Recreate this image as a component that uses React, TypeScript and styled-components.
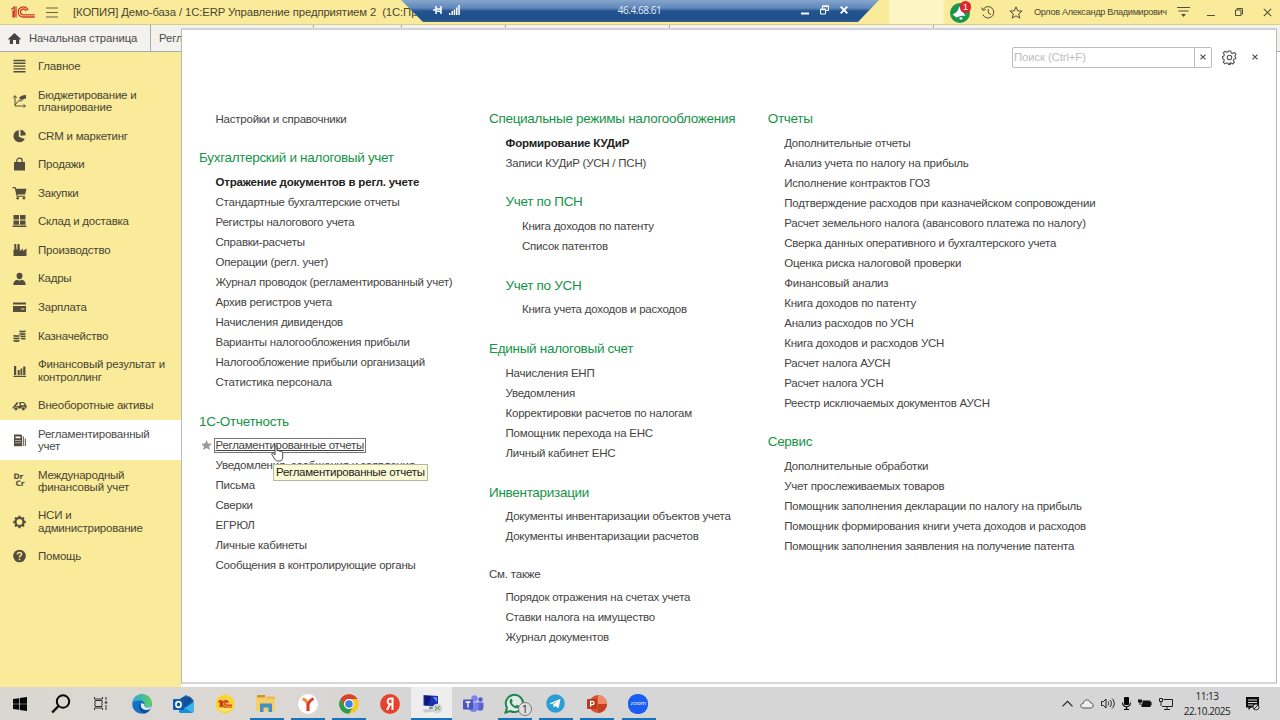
import React from "react";
import styled, { createGlobalStyle, css } from "styled-components";

const ink = "#544c3c";

const Global = createGlobalStyle`
  * { box-sizing: border-box; }
  html, body { margin: 0; padding: 0; overflow: hidden; }
  body { font-family: "Liberation Sans", Arial, sans-serif; color: #444; background: #fff; }
  svg { display: block; flex: none; }
`;

const Screen = styled.div`
  position: relative;
  width: 1280px;
  height: 720px;
  display: flex;
  flex-direction: column;
  overflow: hidden;
  background: #fff;
`;

/* ---------- Title bar ---------- */
const TitleBar = styled.header`
  position: relative;
  height: 25px;
  flex: none;
  display: flex;
  align-items: center;
  background: linear-gradient(90deg, #f9eb9a 0 888px, #fdf5c4 890px 943px, #f9eb9a 945px);
  border-bottom: 1px solid #d9cd8c;
`;
const Logo = styled.div`
  margin-left: 11px;
  width: 35px;
`;
const Title = styled.div`
  margin-left: 15px;
  font-size: 11.33px;
  letter-spacing: -0.12px;
  white-space: pre;
  color: #4d4630;
  flex: 1;
`;
const TitleTools = styled.div`
  display: flex;
  align-items: center;
  padding-right: 8px;
  color: ${ink};
`;
const UserName = styled.span`
  width: 134px;
  margin: 0 9px 0 11px;
  font-size: 9.2px;
  letter-spacing: -0.33px;
  white-space: nowrap;
  color: #4d4630;
`;
const Bell = styled.div`
  position: relative;
  width: 22px;
  height: 22px;
  margin-right: 10px;
`;
const BellCount = styled.span`
  position: absolute;
  left: 11px;
  top: 0;
  width: 11px;
  height: 12px;
  border-radius: 6px;
  background: #e0242f;
  color: #fff;
  font-size: 9px;
  line-height: 12px;
  text-align: center;
`;
const RemoteBar = styled.div`
  position: absolute;
  left: 401px;
  top: 0;
  width: 478px;
  height: 22px;
  display: flex;
  align-items: center;
  padding: 0 31px 2px 32px;
  clip-path: polygon(0 0, 100% 0, 457px 100%, 22px 100%);
  background: linear-gradient(180deg, #86a5cb 0, #5f88bb 8px, #24548f 11px, #1d4f8c 19px, #3a5f86 22px);
  color: #fff;
`;
const RemoteAddress = styled.span`
  flex: 1;
  text-align: center;
  font: 10px/20px "Open Sans", sans-serif;
  letter-spacing: -0.45px;
  padding-left: 18px;
  color: #e6edf6;
`;
const Cluster = styled.div<{ $gap: number }>`
  display: flex;
  align-items: center;
  gap: ${(p) => p.$gap}px;
`;

/* ---------- Tabs ---------- */
const Tabs = styled.nav`
  height: 27px;
  flex: none;
  display: flex;
  background: #f3f2ee;
  border-bottom: 1px solid #a9a9a9;
`;
const Tab = styled.div<{ $width: number }>`
  width: ${(p) => p.$width}px;
  flex: none;
  display: flex;
  align-items: center;
  gap: 8px;
  padding-left: 8px;
  border-right: 1px solid #aaa;
  font-size: 11.33px;
  letter-spacing: -0.07px;
  color: #4a4a4a;
  white-space: nowrap;
  overflow: hidden;
`;

/* ---------- Sidebar ---------- */
const Body = styled.div`
  flex: 1;
  display: flex;
  min-height: 0;
`;
const Sidebar = styled.aside`
  width: 181px;
  background: #f9eb9a;
`;
const Section = styled.div<{ $active?: boolean }>`
  display: flex;
  align-items: center;
  padding: 8.15px 0 8.15px 12px;
  font-size: 11.5px;
  letter-spacing: -0.22px;
  line-height: 12.3px;
  white-space: pre;
  color: #4a4434;
  ${(p) => p.$active && css`background: #fff; color: #4a4a4a;`}
`;
const SectionIcon = styled.span`
  width: 26px;
  height: 12px;
  display: flex;
  align-items: center;
  color: ${ink};
`;
const DrCr = styled.span`
  display: flex;
  flex-direction: column;
  padding-left: 1.5px;
  font: bold 7.5px/6.5px "DejaVu Sans", sans-serif;
  letter-spacing: -0.2px;
  span + span { padding-left: 2px; }
`;

/* ---------- Function menu ---------- */
const Panel = styled.main`
  position: absolute;
  left: 181px;
  top: 28px;
  width: 1096px;
  height: 656px;
  background: #fff;
  border: 1px solid #b9b9b9;
  border-top: 2px solid #d2d2d6;
  border-bottom: 2px solid #d6d6d6;
`;
const PanelHead = styled.div`
  display: flex;
  align-items: center;
  justify-content: flex-end;
  gap: 9.5px;
  padding: 17px 18px 0 0;
  height: 37px;
`;
const Search = styled.div`
  width: 200px;
  height: 21px;
  display: flex;
  border: 1px solid #bcbcbc;
  border-radius: 2px;
`;
const SearchText = styled.span`
  flex: 1;
  padding-left: 1px;
  font-size: 11.33px;
  letter-spacing: -0.1px;
  line-height: 19px;
  color: #bdbdbd;
`;
const SearchClear = styled.span`
  width: 17px;
  display: flex;
  align-items: center;
  justify-content: center;
  border-left: 1px solid #bcbcbc;
`;
const PanelClose = styled.span`
  padding-left: 6px;
`;
const Columns = styled.div`
  display: flex;
  padding: 37px 0 0 17px;
`;
const Column = styled.div<{ $width: number }>`
  width: ${(p) => p.$width}px;
  flex: none;
`;
const Group = styled.section<{ $indent?: boolean }>`
  margin-bottom: 14.85px;
  padding-left: ${(p) => (p.$indent ? 16.5 : 0)}px;
`;
const Heading = styled.h2<{ $plain?: boolean }>`
  margin: 0;
  font-weight: normal;
  white-space: nowrap;
  ${(p) =>
    p.$plain
      ? css`margin-top: -1.6px; height: 27.2px; line-height: 28px; font-size: 11.5px; letter-spacing: -0.2px; color: #444;`
      : css`height: 28.6px; line-height: 29px; font-size: 13.5px; letter-spacing: -0.3px; color: #149447;`}
`;
const Item = styled.div<{ $bold?: boolean }>`
  position: relative;
  height: 20px;
  padding-left: 16.5px;
  font-size: 11.5px;
  letter-spacing: ${(p) => (p.$bold ? -0.19 : -0.23)}px;
  line-height: 20px;
  white-space: nowrap;
  color: ${(p) => (p.$bold ? "#222" : "#444")};
  font-weight: ${(p) => (p.$bold ? "bold" : "normal")};
`;
const First = styled.div`
  padding-top: 5.1px;
  margin-bottom: 14.2px;
`;
const Star = styled.span`
  position: absolute;
  left: 2px;
  top: 5px;
`;
const Focused = styled.span`
  display: inline-block;
  height: 15px;
  line-height: 13px;
  margin: 0 -2px;
  padding: 0 1px;
  border: 1px solid #777;
  letter-spacing: -0.29px;
  text-decoration: underline;
  vertical-align: middle;
  position: relative;
  top: -1px;
`;
const Tooltip = styled.div`
  position: absolute;
  left: 273px;
  top: 464px;
  width: 155px;
  height: 17px;
  padding-left: 2px;
  border: 1px solid #b8b69c;
  background: #fdfad6;
  font-size: 11.5px;
  letter-spacing: -0.28px;
  line-height: 15px;
  color: #222;
  white-space: nowrap;
`;
const Cursor = styled.div`
  position: absolute;
  left: 270.5px;
  top: 445px;
`;

/* ---------- Taskbar ---------- */
const Taskbar = styled.footer`
  position: relative;
  height: 33px;
  flex: none;
  display: flex;
  background: linear-gradient(90deg, #d9d7d0 0, #dcd8d4 250px, #d6d6d6 360px, #d6d6d6 1280px);
`;
const TaskButton = styled.div<{ $width?: number; $active?: boolean; $open?: boolean }>`
  position: relative;
  width: ${(p) => p.$width ?? 41.33}px;
  flex: none;
  display: flex;
  align-items: center;
  justify-content: center;
  background: ${(p) => (p.$active ? "#eeeeee" : "transparent")};
  &::after {
    content: "";
    display: ${(p) => (p.$open || p.$active ? "block" : "none")};
    position: absolute;
    bottom: 0;
    left: ${(p) => (p.$active ? 0 : 4)}px;
    right: ${(p) => (p.$active ? 0 : 3.5)}px;
    height: 2px;
    background: #1a73b8;
  }
`;
const Tray = styled.div`
  margin-left: auto;
  display: flex;
  align-items: center;
  padding-right: 20px;
  color: #222;
`;
const Clock = styled.div`
  width: 54px;
  margin: 0 11px 0 7px;
  font: 10px/15px "Open Sans", sans-serif;
  letter-spacing: -0.45px;
  text-align: center;
  color: #222;
  white-space: nowrap;
`;

/* ---------- Drawings ---------- */
const Cross = ({ size = 7, w = 1.1 }: { size?: number; w?: number }) => (
  <svg width={size} height={size} viewBox="0 0 8 8" stroke="currentColor" strokeWidth={w} fill="none">
    <path d="M.7 .7L7.3 7.3M7.3 .7L.7 7.3" />
  </svg>
);

const glyphs: Record<string, React.ReactNode> = {
  main: <path d="M1 .8h12v1.400H1zM1 3.600h12v1.400H1zM1 6.400h12v1.400H1zM1 9.200h12v1.400H1zM1 12h12v1.400H1z" />,
  budget: (
    <>
      <path d="M2.500 2v10h10M.8 3.800L2.500 1.600l1.700 2.200M11 10.400L13 12l-2 1.600M2.500 11L6 6.800h3L12.500 3" fill="none" stroke="currentColor" strokeWidth="1" />
      <path d="M7 3l3-1.500 3.500-.5v3.500L9 5.500H7z" />
    </>
  ),
  pie: <path d="M6.300 1.200V7.700l6 2.200A6 6 0 1 1 6.300 1.200zM8 .8a6 6 0 0 1 5.300 5.500L8 6.700z" />,
  bag: (
    <>
      <path d="M1.500 5h11v8.500h-11z" />
      <path d="M4.300 6.500V3.800a2.700 2.700 0 0 1 5.400 0v2.700" fill="none" stroke="currentColor" strokeWidth="1.200" />
    </>
  ),
  cart: (
    <>
      <path d="M0 1h3l.6 1.700H14L12.600 8.600H4.800l.3 1.100h7.500v1H4.200L2.300 2.200H0z" />
      <circle cx="5.200" cy="12.300" r="1.300" /><circle cx="11.400" cy="12.300" r="1.300" />
    </>
  ),
  store: <path d="M1 1h5.500v4.500H1zM7.500 1H13v4.500H7.500zM1 6.500h5.500v4.300H1zM7.500 6.500H13v4.300H7.500zM0 11.600h14V13H0z" />,
  factory: <path d="M1 13V6.500h1L1.700 1h2L4 6.500h.8L5 1h2l.4 5.500V8l3-2.500V8L14 5.500V13z" />,
  person: (
    <>
      <path d="M7 .8c2 0 3 1.300 3 3S8.700 7.300 7 7.300 4 5.500 4 3.800s1-3 3-3z" />
      <path d="M.8 13c0-3 1.200-4.700 4.200-5.200l2 1 2-1c3 .5 4.200 2.200 4.200 5.200z" />
    </>
  ),
  card: <path d="M.5 2.500h13v2H.5zM.5 6h13v6H.5zM8.500 8.500v1H12v-1z" fillRule="evenodd" />,
  coins: (
    <g fill="none" stroke="currentColor" strokeWidth="1.600">
      <path d="M7 2c2 .8 4 .8 6 0M7 4.500c2 .8 4 .8 6 0M8 7c2 .8 3 .8 5 0M8.500 9.500c2 .5 3 .5 4.500 0M1 6.500c2 .8 4 .8 6 0M1 9c2 .8 4 .8 6 0M1 11.500c2 .8 4 .8 6 0" />
    </g>
  ),
  chart: <path d="M1.500 2h2.200v9H1.500zM5.200 6h2v5h-2zM8 4.500h1.800V11H8zM10.700 2.500h2.200V11h-2.200zM1 11.800h12.500V13H1z" />,
  truck: (
    <>
      <path d="M0 9.500L4.500 4l1.500.8L3.500 8H7V4h4.500L14 7.500v3H0z" />
      <path d="M8.500 5h2.300l1.400 2.200H8.500z" fill="#f9eb9a" />
      <circle cx="3.500" cy="10.800" r="1.900" stroke="#f9eb9a" strokeWidth=".7" /><circle cx="10.800" cy="10.800" r="1.900" stroke="#f9eb9a" strokeWidth=".7" />
    </>
  ),
  report: (
    <>
      <path d="M1.500 1.500h7l1 1v10.800h-8zM3 3.500v1.800h5V3.500zM3 7v1h1V7zm2 0v1h1V7zm2 0v1h1V7zM3 9.300v1h1v-1zm2 0v1h1v-1zm2 0v1h1v-1z" fillRule="evenodd" />
      <path d="M10.800 3.500v9.500M12.800 5.500V13" stroke="currentColor" strokeWidth="1" />
    </>
  ),
  gear: (
    <g fill="none" stroke="currentColor">
      <circle cx="7" cy="7" r="4" strokeWidth="2.200" />
      <path d="M7 .8v2M7 11.200v2M.8 7h2M11.200 7h2M2.600 2.600L4 4M10 10l1.400 1.400M2.600 11.400L4 10M10 4l1.400-1.400" strokeWidth="2.300" />
    </g>
  ),
  help: (
    <>
      <circle cx="7" cy="7" r="6.300" />
      <path d="M4.900 5.500C4.900 2.700 9.200 2.800 9.100 5.300 9 6.800 7 6.700 7 8.400M7 9.700v1.500" fill="none" stroke="#f9eb9a" strokeWidth="1.500" />
    </>
  ),
};

const Glyph = ({ name }: { name: string }) => (
  <svg width="15" height="14" viewBox="-.5 0 15 14" fill="currentColor">{glyphs[name]}</svg>
);

const Logo1C = () => (
  <svg width="24" height="12" viewBox="0 0 24 12" fill="none" stroke="#cf3a28" strokeWidth="1.300">
    <path d="M.3 3.500L3.200 1v10.500M2 4.500V11.500M5 .5v11" />
    <path d="M17 4.200A5 5 0 1 0 12.500 11h11.300M15.200 5.200a2.900 2.900 0 1 0-2.700 3.600h11.300" />
  </svg>
);

/* ---------- Data ---------- */
const sections: { icon: string; label: string; active?: boolean }[] = [
  { icon: "main", label: "Главное" },
  { icon: "budget", label: "Бюджетирование и\nпланирование" },
  { icon: "pie", label: "CRM и маркетинг" },
  { icon: "bag", label: "Продажи" },
  { icon: "cart", label: "Закупки" },
  { icon: "store", label: "Склад и доставка" },
  { icon: "factory", label: "Производство" },
  { icon: "person", label: "Кадры" },
  { icon: "card", label: "Зарплата" },
  { icon: "coins", label: "Казначейство" },
  { icon: "chart", label: "Финансовый результат и\nконтроллинг" },
  { icon: "truck", label: "Внеоборотные активы" },
  { icon: "report", label: "Регламентированный\nучет", active: true },
  { icon: "drcr", label: "Международный\nфинансовый учет" },
  { icon: "gear", label: "НСИ и\nадминистрирование" },
  { icon: "help", label: "Помощь" },
];

type GroupData = { title: string; items: string[]; bold?: boolean; indent?: boolean; plain?: boolean };

const accounting: GroupData[] = [
  {
    title: "Бухгалтерский и налоговый учет",
    bold: true,
    items: [
      "Отражение документов в регл. учете", "Стандартные бухгалтерские отчеты", "Регистры налогового учета",
      "Справки-расчеты", "Операции (регл. учет)", "Журнал проводок (регламентированный учет)",
      "Архив регистров учета", "Начисления дивидендов", "Варианты налогообложения прибыли",
      "Налогообложение прибыли организаций", "Статистика персонала",
    ],
  },
  {
    title: "1С-Отчетность",
    items: [
      "Регламентированные отчеты", "Уведомления, сообщения и заявления", "Письма", "Сверки", "ЕГРЮЛ",
      "Личные кабинеты", "Сообщения в контролирующие органы",
    ],
  },
];
const taxes: GroupData[] = [
  { title: "Специальные режимы налогообложения", bold: true, items: ["Формирование КУДиР", "Записи КУДиР (УСН / ПСН)"] },
  { title: "Учет по ПСН", indent: true, items: ["Книга доходов по патенту", "Список патентов"] },
  { title: "Учет по УСН", indent: true, items: ["Книга учета доходов и расходов"] },
  {
    title: "Единый налоговый счет",
    items: ["Начисления ЕНП", "Уведомления", "Корректировки расчетов по налогам", "Помощник перехода на ЕНС", "Личный кабинет ЕНС"],
  },
  { title: "Инвентаризации", items: ["Документы инвентаризации объектов учета", "Документы инвентаризации расчетов"] },
  { title: "См. также", plain: true, items: ["Порядок отражения на счетах учета", "Ставки налога на имущество", "Журнал документов"] },
];
const reports: GroupData[] = [
  {
    title: "Отчеты",
    items: [
      "Дополнительные отчеты", "Анализ учета по налогу на прибыль", "Исполнение контрактов ГОЗ",
      "Подтверждение расходов при казначейском сопровождении", "Расчет земельного налога (авансового платежа по налогу)",
      "Сверка данных оперативного и бухгалтерского учета", "Оценка риска налоговой проверки", "Финансовый анализ",
      "Книга доходов по патенту", "Анализ расходов по УСН", "Книга доходов и расходов УСН", "Расчет налога АУСН",
      "Расчет налога УСН", "Реестр исключаемых документов АУСН",
    ],
  },
  {
    title: "Сервис",
    items: [
      "Дополнительные обработки", "Учет прослеживаемых товаров", "Помощник заполнения декларации по налогу на прибыль",
      "Помощник формирования книги учета доходов и расходов", "Помощник заполнения заявления на получение патента",
    ],
  },
];

const Groups = ({ data }: { data: GroupData[] }) => (
  <>
    {data.map((g) => (
      <Group key={g.title} $indent={g.indent}>
        <Heading $plain={g.plain}>{g.title}</Heading>
        {g.items.map((t, i) =>
          t === "Регламентированные отчеты" ? (
            <Item key={t}>
              <Star>
                <svg width="11" height="10" viewBox="0 0 11 10" fill="#999"><path d="M5.500 0l1.500 3.500 4 .2-3 2.500 1 3.800-3.500-2.100L2 10l1-3.800L0 3.700l4-.2z" /></svg>
              </Star>
              <Focused>{t}</Focused>
            </Item>
          ) : (
            <Item key={t} $bold={g.bold && i === 0}>{t}</Item>
          )
        )}
      </Group>
    ))}
  </>
);

const WindowsIcon = () => (
  <svg width="14" height="14" viewBox="0 0 14 14" fill="#050505"><path d="M0 2l6-.8v5.500H0zM6.700 1.100L14 0v6.700H6.700zM0 7.300h6v5.500L0 12zM6.700 7.300H14V14l-7.300-1.100z" /></svg>
);
const SearchIcon = () => (
  <svg width="20" height="20" viewBox="0 0 20 20" fill="none" stroke="#080808" strokeWidth="2"><circle cx="12" cy="7.500" r="6.200" /><path d="M7.500 12L1.200 18.500" strokeWidth="2.400" /></svg>
);
const TaskViewIcon = () => (
  <svg width="14" height="13" viewBox="0 0 14 13" fill="none" stroke="#333"><path d="M.5 0v2h8V0M.5 13v-2h8v2M1 3.500h7v6H1zM12 0v3M12 8v5" /><path d="M10.800 4.500h2.400v2h-2.400z" fill="#333" stroke="none" /></svg>
);
const EdgeIcon = () => (
  <svg width="20" height="20" viewBox="0 0 20 20">
    <defs><linearGradient id="eg" x1="0" x2="1"><stop offset="0" stopColor="#2aa7e0" /><stop offset="1" stopColor="#62cf5c" /></linearGradient></defs>
    <circle cx="10" cy="10" r="9.800" fill="#1372c4" />
    <path d="M.3 9C1.500 2.500 6 .2 10 .2c6 0 9.800 4.300 9.800 8.600 0 3-2.300 4.700-4.800 4.700-2 0-3.500-.7-3-1.800 1.500-3-1-5.200-4-5.200C4 6.500 1.500 7.500.3 9z" fill="url(#eg)" />
    <path d="M12.300 10.500c-.8 1 .3 3 3 3 1.800 0 3.300-.6 4.200-2-.4 2-1 3-1.700 3.700-2.500 1.600-6.800 1.300-8.600-1C8.300 12.500 8.500 10.300 10 9z" fill="#dfeef6" />
    <path d="M8 9.500c-2.300 3 0 8.500 4 10 3-.5 5-2 6.200-4.500-3 1.800-7.800 1.300-9.200-2z" fill="#0c4f9e" />
  </svg>
);
const OutlookIcon = () => (
  <svg width="21" height="18" viewBox="0 0 21 18">
    <path d="M6 4.500L13 0l7.500 5v12H6z" fill="#1367b8" /><path d="M8 3l9-1.500 3 4-7 5.500H8z" fill="#174f93" />
    <path d="M6 17.500L20.500 7v9a2 2 0 0 1-2 2H7z" fill="#39b5ee" /><path d="M6 10l14 8H8a2 2 0 0 1-2-2z" fill="#1b8ddb" />
    <rect y="4" width="11" height="11" rx="1" fill="#0f5cad" /><ellipse cx="5.500" cy="9.500" rx="2.600" ry="2.900" fill="none" stroke="#fff" strokeWidth="1.600" />
  </svg>
);
const OneCIcon = () => (
  <svg width="20" height="20" viewBox="0 0 20 20">
    <circle cx="10" cy="10" r="9.500" fill="#fbd535" /><path d="M3 14a9 9 0 0 0 14 0z" fill="#ffe873" />
    <g fill="none" stroke="#cf3420" strokeWidth="1.200"><path d="M3.200 8l2-1.400v6.600M6.500 6.200v7M13.500 8.300A3.200 3.200 0 1 0 11 13h6M12.400 9a1.500 1.500 0 1 0-1.400 2.200h6" /></g>
  </svg>
);
const FolderIcon = () => (
  <svg width="20" height="17" viewBox="0 0 20 17">
    <path d="M1 0h8v4H1z" fill="#c9962c" /><path d="M0 2.500h19V16H0z" fill="#f6cf64" /><path d="M10 1.500h9V4h-9z" fill="#e9bd50" />
    <path d="M4 8.500h12V17h-3.500v-4.500h-5V17H4z" fill="#4390c4" />
  </svg>
);
const YBrowserIcon = () => (
  <svg width="20" height="20" viewBox="0 0 20 20">
    <circle cx="10" cy="10" r="9.900" fill="#fff" />
    <path d="M4.500 5c3 .5 5 3 5.500 6.500V17" fill="none" stroke="#f08a2c" strokeWidth="2.800" /><path d="M15.500 4.500c-3 1.500-5 4-5.500 7V17" fill="none" stroke="#dc3a35" strokeWidth="2.800" />
  </svg>
);
const ChromeIcon = () => (
  <svg width="20" height="20" viewBox="0 0 20 20">
    <circle cx="10" cy="10" r="9.800" fill="#f8c625" />
    <path d="M1.500 5.100A9.800 9.800 0 0 1 18.500 5.100H10A4.900 4.900 0 0 0 5.500 12z" fill="#d8402f" />
    <path d="M1.500 5.100A9.800 9.800 0 0 0 10 19.800L14.300 12.400A4.900 4.900 0 0 1 5.700 12.400z" fill="#2e9c4c" />
    <circle cx="10" cy="10" r="4.900" fill="#fff" /><circle cx="10" cy="10" r="3.800" fill="#3c7fe4" />
  </svg>
);
const YandexIcon = () => (
  <svg width="20" height="20" viewBox="0 0 20 20">
    <circle cx="10" cy="10" r="9.900" fill="#e8402a" />
    <path d="M12.500 16V4.500h-2c-3.800 0-3.700 5.300 0 5.800h2M10 10.300L7 16" fill="none" stroke="#fff" strokeWidth="2" />
  </svg>
);
const RdpIcon = () => (
  <svg width="22" height="20" viewBox="0 0 22 20">
    <path d="M2.500 1l14.500 1v10.500L2.500 11.500z" fill="#1b2fb0" /><path d="M3.500 2l7 .5-3.500 9-3.500-.3z" fill="#0d1a78" /><path d="M12 3l4 .3V8z" fill="#6f93ea" />
    <path d="M8 12.500h5v2.500H8z" fill="#8c8c99" /><path d="M1.500 15.500L13 15l3 2-12 1.700z" fill="#c7c9cf" />
    <circle cx="16.300" cy="14.500" r="4.800" fill="#cfd6cf" /><path d="M14 12.500l2.200 2-2.200 2M18.800 12l-2 2 2 2.200" fill="none" stroke="#4c8c4a" strokeWidth="1" />
  </svg>
);
const TeamsIcon = () => (
  <svg width="21" height="18" viewBox="0 0 21 18">
    <circle cx="17.500" cy="4.500" r="2.200" fill="#5059c9" /><path d="M14 7.500h6.500v5a3.500 3.500 0 0 1-6.500 1.500z" fill="#5b63cc" />
    <circle cx="11.500" cy="3.500" r="3.200" fill="#7b83eb" /><path d="M6 7.500h9.500v5.500a5 5 0 0 1-9.500 1z" fill="#7b83eb" />
    <rect y="4.500" width="10" height="10" rx="1" fill="#4b53bc" /><path d="M2.500 7h5M5 7v5.500" stroke="#fff" strokeWidth="1.400" />
  </svg>
);
const Badge = styled.span`
  position: absolute;
  left: 24px;
  top: 15px;
  width: 14px;
  height: 14px;
  border: 1px solid #777;
  border-radius: 50%;
  background: #dedede;
  color: #111;
  font: 10px/12px "Open Sans", sans-serif;
  text-align: center;
`;
const WhatsAppIcon = () => (
  <svg width="21" height="21" viewBox="0 0 21 21">
    <path d="M1.500 19.500L3 14.800A8.600 8.600 0 1 1 6.300 18z" fill="#e3ece4" stroke="#1f8550" strokeWidth="2" />
    <path d="M7.300 5.500l1.500 2.600-1 1.300c.8 1.700 2 2.800 3.700 3.600l1.300-1.200 2.600 1.300c-.2 1.800-1.700 2.500-3.200 2.200C8.500 14.500 6 11.500 5.600 8.500c0-1.500.6-2.700 1.700-3z" fill="#1f8550" />
  </svg>
);
const TelegramIcon = () => (
  <svg width="19" height="19" viewBox="0 0 19 19"><circle cx="9.500" cy="9.500" r="9.300" fill="#2b9fd4" /><path d="M3.500 9.500l11-4.700-1.900 9.500-3.200-2.300-1.700 1.600-.5-3 5-4-6.200 3.700z" fill="#fff" /></svg>
);
const PowerPointIcon = () => (
  <svg width="20" height="20" viewBox="0 0 20 20">
    <circle cx="11" cy="10" r="9" fill="#d8532f" /><path d="M11 1a9 9 0 0 1 9 9h-9z" fill="#ef8b67" /><path d="M20 10a9 9 0 0 1-9 9v-9z" fill="#c6401f" />
    <rect y="5" width="10" height="10" rx="1" fill="#b8391b" /><path d="M3.600 12.800V7.400h1.700c2.300 0 2.300 3.200 0 3.200H3.600" fill="none" stroke="#fff" strokeWidth="1.300" />
  </svg>
);
const Zoom = styled.span`
  width: 20px;
  height: 20px;
  border-radius: 45%;
  background: #1a5df0;
  color: #fff;
  font: 6px/19px "Open Sans", sans-serif;
  text-align: center;
`;

export default function App() {
  return (
    <Screen>
      <Global />
      <TitleBar>
        <Logo><Logo1C /></Logo>
        <svg width="12" height="11" viewBox="0 0 12 11" stroke="#6b6340" strokeWidth="1.100"><path d="M0 1h12M0 5.500h12M0 10h12" /></svg>
        <Title>[КОПИЯ] Демо-база / 1С:ERP Управление предприятием 2  (1С:Предприятие)</Title>
        <TitleTools>
          <Bell>
            <svg width="22" height="22" viewBox="0 0 22 22"><circle cx="11" cy="12" r="10" fill="#1a9650" /><path d="M3.500 13.500C8 12 9 9 10.500 5.500l6 9.500c-3-.8-5.500-.3-9 1.500z" fill="#fff" /><path d="M10 17l3-1 .5 2-2 .8z" fill="#fff" /></svg>
            <BellCount>1</BellCount>
          </Bell>
          <Cluster $gap={14}>
            <svg width="14" height="13" viewBox="0 0 14 13" fill="none" stroke="currentColor"><path d="M2.200 3.300A5.700 5.700 0 1 1 1.800 8.500M.5 1.500l1.300 2.800 3-.8M7.300 3v4l2.700 1.500" /></svg>
            <svg width="14" height="13" viewBox="0 0 14 13" fill="none" stroke="currentColor"><path d="M7 .9l1.700 3.900 4.400.3-3.400 2.800 1.100 4.200L7 9.800l-3.800 2.300 1.100-4.200L.9 5.100l4.400-.3z" /></svg>
          </Cluster>
          <UserName>Орлов Александр Владимирович</UserName>
          <Cluster $gap={17}>
            <svg width="13" height="12" viewBox="0 0 13 12" stroke="currentColor" strokeWidth="1.200"><path d="M0 1.500h13M1.500 5h10" /><path d="M4 8h5l-2.500 3z" fill="currentColor" stroke="none" /></svg>
            <Cluster $gap={20}>
              <svg width="8" height="10" viewBox="0 0 8 10" stroke="currentColor"><path d="M0 8.500h8" /></svg>
              <svg width="8" height="8" viewBox="0 0 8 8" fill="none" stroke="currentColor"><path d="M.5 2h5.500v5.500H.5zM2 2V.5h5.500V6H6" /></svg>
              <Cross size={9} w={0.9} />
            </Cluster>
          </Cluster>
        </TitleTools>
        <RemoteBar>
          <Cluster $gap={7}>
            <svg width="9" height="8" viewBox="0 0 9 8" stroke="#fff" strokeWidth="1.500"><path d="M0 4h3M3 0v8M8 0v8M3 3h5M3 5.300h5" /></svg>
            <svg width="11" height="10" viewBox="0 0 11 10" fill="#fff"><path d="M0 8h1.500v2H0zM2.500 6H4v4H2.500zM4.700 4.500h1.600V10H4.700zM7 2.500h1.500V10H7zM9.300 0h1.500v10H9.300z" /></svg>
          </Cluster>
          <RemoteAddress>46.4.68.61</RemoteAddress>
          <Cluster $gap={11}>
            <svg width="8" height="10" viewBox="0 0 8 10"><path d="M0 7.500h8v2H0z" fill="#fff" /></svg>
            <svg width="9" height="10" viewBox="0 0 9 10" fill="none" stroke="#fff"><path d="M.5 4h5v5h-5zM.5 4.700h5M2.500 4V.8h6v4.700H5.500M2.500 1.500h6" /></svg>
            <Cross size={8} w={1.900} />
          </Cluster>
        </RemoteBar>
      </TitleBar>

      <Tabs>
        <Tab $width={151}>
          <svg width="13" height="11" viewBox="0 0 13 11" fill="#444"><path d="M6.500 0L13 6l-.8.800-1-.8v5H8V7H5v4H1.800V6l-1 .8L0 6z" /></svg>
          Начальная страница
        </Tab>
        <Tab $width={163}>Регламентированные отчеты</Tab>
        <Tab $width={88} />
        <Tab $width={104} />
        <Tab $width={164} />
        <Tab $width={264} />
      </Tabs>

      <Body>
        <Sidebar>
          {sections.map((s) => (
            <Section key={s.label} $active={s.active}>
              <SectionIcon>
                {s.icon === "drcr" ? <DrCr><span>Dr</span><span>Cr</span></DrCr> : <Glyph name={s.icon} />}
              </SectionIcon>
              {s.label}
            </Section>
          ))}
        </Sidebar>
      </Body>

      <Panel>
        <PanelHead>
          <Search>
            <SearchText>Поиск (Ctrl+F)</SearchText>
            <SearchClear><Cross size={6} w={1.400} /></SearchClear>
          </Search>
          <svg width="15" height="15" viewBox="0 0 24 24" fill="none" stroke="#555" strokeWidth="1.800" strokeLinejoin="round">
            <path d="M10 1.500h4l.7 3.300 2 .9 2.900-1.900 2.800 2.800-1.900 2.900.9 2 .6.300V14l-3 .8-.9 2 1.800 2.800-2.800 2.700-2.800-1.700-2 .8L13.500 23h-3l-.9-1.800-2-.7-2.900 1.700-2.700-2.800 1.700-2.800-.8-2L1 13.500v-3l2-.9.800-2L2 4.700 4.700 2l2.900 1.700 2-.7z" /><circle cx="12" cy="12" r="3.600" />
          </svg>
          <PanelClose><Cross size={6} w={1.400} /></PanelClose>
        </PanelHead>
        <Columns>
          <Column $width={290}>
            <First><Item>Настройки и справочники</Item></First>
            <Groups data={accounting} />
          </Column>
          <Column $width={278.700}><Groups data={taxes} /></Column>
          <Column $width={400}><Groups data={reports} /></Column>
        </Columns>
      </Panel>
      <Tooltip>Регламентированные отчеты</Tooltip>
      <Cursor>
        <svg width="13" height="17" viewBox="0 0 13 17" fill="#fff" stroke="#333" strokeWidth=".9"><path d="M4 10V1.800C4 .3 6 .3 6 1.800V6c.3-.8 1.800-.8 2 .3.400-.7 1.700-.5 1.900.5.5-.6 1.700-.3 1.800.8V12c0 2.500-1.200 4-3 4H6.500C5 16 4 14.500 3 13L.9 9.700c-.7-1.200.7-2 1.600-1z" /></svg>
      </Cursor>

      <Taskbar>
        <TaskButton $width={40.600}><WindowsIcon /></TaskButton>
        <TaskButton $width={40.600}><SearchIcon /></TaskButton>
        <TaskButton $width={40.600}><TaskViewIcon /></TaskButton>
        <TaskButton><EdgeIcon /></TaskButton>
        <TaskButton><OutlookIcon /></TaskButton>
        <TaskButton><OneCIcon /></TaskButton>
        <TaskButton $open><FolderIcon /></TaskButton>
        <TaskButton $open><YBrowserIcon /></TaskButton>
        <TaskButton $open><ChromeIcon /></TaskButton>
        <TaskButton><YandexIcon /></TaskButton>
        <TaskButton $active><RdpIcon /></TaskButton>
        <TaskButton><TeamsIcon /></TaskButton>
        <TaskButton $open><WhatsAppIcon /><Badge>1</Badge></TaskButton>
        <TaskButton $open><TelegramIcon /></TaskButton>
        <TaskButton $open><PowerPointIcon /></TaskButton>
        <TaskButton $open><Zoom>zoom</Zoom></TaskButton>
        <Tray>
          <Cluster $gap={7}>
            <svg width="11" height="7" viewBox="0 0 11 7" fill="none" stroke="#222" strokeWidth="1.200"><path d="M.5 6.300l5-5 5 5" /></svg>
            <svg width="14" height="10" viewBox="0 0 14 10" fill="#eee" stroke="#444" strokeWidth=".9"><path d="M3.200 9C-.3 8.700.2 4.500 3.200 4.500 3.800.2 9.300-.3 10.200 3.500 14 3.800 14 9 10.700 9z" /></svg>
            <svg width="14" height="11" viewBox="0 0 14 11" fill="none" stroke="#222"><path d="M.5 3.500H2.500L5 1v9L2.500 7.500h-2zM7 3.500c.8 1.200.8 2.800 0 4M9 2c1.800 2 1.800 5 0 7M11 .5c3 3 3 7 0 10" /></svg>
            <svg width="9" height="13" viewBox="0 0 9 13" fill="#050505"><rect x="2" width="5" height="8" rx="1" /><path d="M0 5.500h1c0 5 7 5 7 0h1c0 3-1.500 4.300-3.800 4.600V12H7v1H2v-1h1.800v-1.900C1.500 9.800 0 8.500 0 5.500z" /></svg>
            <svg width="14" height="9" viewBox="0 0 14 9" fill="#111"><path d="M0 .5h4v3H2.500V6h-1V3.500H0zM4.500 1.500h8V3h1v3.500h-1V8H3.500V4.500h1z" /></svg>
            <svg width="14" height="12" viewBox="0 0 14 12" fill="none" stroke="#222"><path d="M4.500 1.500h9v7H3M8 8.500v2.500M5 11.500h6M.5.500h3v3h-3zM2 3.500V8" /></svg>
          </Cluster>
          <Clock>11:13<br />22.10.2025</Clock>
          <svg width="15" height="14" viewBox="0 0 15 14"><path d="M1 0h13v10.500H6L3.500 13v-2.500H1z" fill="#0a0a0a" /><path d="M3 3h9M3 5.500h9M3 8h5" stroke="#ddd" /><circle cx="11" cy="10" r="3" fill="#d6d6d6" stroke="#222" strokeWidth=".9" /><path d="M9 12l4-4" stroke="#222" /></svg>
        </Tray>
      </Taskbar>
    </Screen>
  );
}
